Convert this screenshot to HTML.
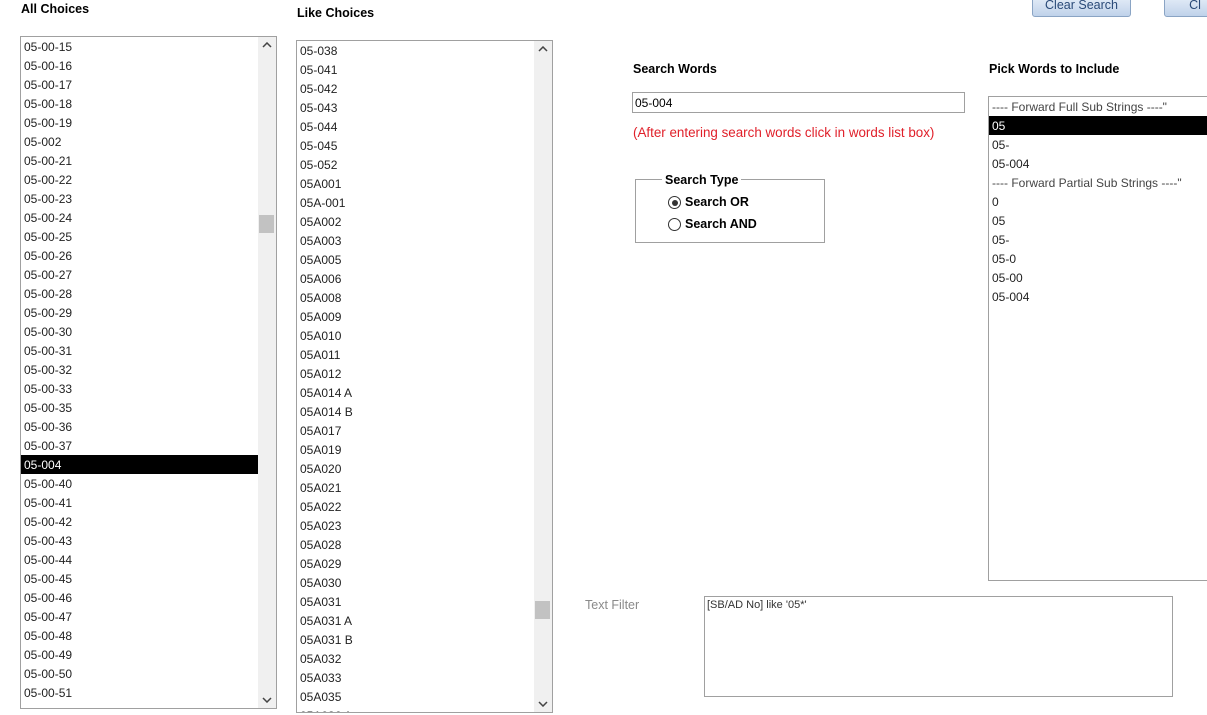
<!DOCTYPE html>
<html><head><style>
body{margin:0;width:1207px;height:715px;overflow:hidden;background:#fff;font-family:"Liberation Sans",sans-serif;font-size:12px;color:#000;position:relative}
.a{position:absolute}
.b{font-weight:bold;font-size:12.5px}
.lb{position:absolute;border:1px solid #a0a0a0;background:#fff;overflow:hidden}
.lb div.r{height:19px;line-height:20px;padding-left:3px;white-space:nowrap;color:#222}
.sel{background:#000;color:#fff!important}
.sb{position:absolute;top:0;bottom:0;right:0;width:18px;background:#f0f0f0}
.th{position:absolute;left:1px;width:15px;height:18px;background:#c2c2c2}
.ar{position:absolute;left:4px}
.btn{position:absolute;height:20px;border:1px solid #8aa4c4;border-radius:3px;background:linear-gradient(#e6eef8,#bfd2ea);color:#2a4a78;font-size:12.5px;text-align:center;line-height:18px}
</style></head><body>
<div class="a b" style="left:21px;top:2px">All Choices</div>
<div class="a b" style="left:297px;top:6px">Like Choices</div>
<div class="btn" style="left:1032px;top:-5px;width:97px">Clear Search</div>
<div class="btn" style="left:1164px;top:-5px;width:60px">Cl</div>

<div class="lb" style="left:20px;top:36px;width:255px;height:671px">
<div class="r">05-00-15</div><div class="r">05-00-16</div><div class="r">05-00-17</div><div class="r">05-00-18</div><div class="r">05-00-19</div><div class="r">05-002</div><div class="r">05-00-21</div><div class="r">05-00-22</div><div class="r">05-00-23</div><div class="r">05-00-24</div><div class="r">05-00-25</div><div class="r">05-00-26</div><div class="r">05-00-27</div><div class="r">05-00-28</div><div class="r">05-00-29</div><div class="r">05-00-30</div><div class="r">05-00-31</div><div class="r">05-00-32</div><div class="r">05-00-33</div><div class="r">05-00-35</div><div class="r">05-00-36</div><div class="r">05-00-37</div><div class="r sel" style="margin-right:18px">05-004</div><div class="r">05-00-40</div><div class="r">05-00-41</div><div class="r">05-00-42</div><div class="r">05-00-43</div><div class="r">05-00-44</div><div class="r">05-00-45</div><div class="r">05-00-46</div><div class="r">05-00-47</div><div class="r">05-00-48</div><div class="r">05-00-49</div><div class="r">05-00-50</div><div class="r">05-00-51</div>
<div class="sb"><svg class="ar" style="top:5px" width="10" height="6"><path d="M1 5L5 1L9 5" stroke="#444" stroke-width="1.5" fill="none"/></svg><div class="th" style="top:178px"></div><svg class="ar" style="bottom:5px" width="10" height="6"><path d="M1 1L5 5L9 1" stroke="#444" stroke-width="1.5" fill="none"/></svg></div>
</div>

<div class="lb" style="left:296px;top:40px;width:255px;height:671px">
<div class="r">05-038</div><div class="r">05-041</div><div class="r">05-042</div><div class="r">05-043</div><div class="r">05-044</div><div class="r">05-045</div><div class="r">05-052</div><div class="r">05A001</div><div class="r">05A-001</div><div class="r">05A002</div><div class="r">05A003</div><div class="r">05A005</div><div class="r">05A006</div><div class="r">05A008</div><div class="r">05A009</div><div class="r">05A010</div><div class="r">05A011</div><div class="r">05A012</div><div class="r">05A014 A</div><div class="r">05A014 B</div><div class="r">05A017</div><div class="r">05A019</div><div class="r">05A020</div><div class="r">05A021</div><div class="r">05A022</div><div class="r">05A023</div><div class="r">05A028</div><div class="r">05A029</div><div class="r">05A030</div><div class="r">05A031</div><div class="r">05A031 A</div><div class="r">05A031 B</div><div class="r">05A032</div><div class="r">05A033</div><div class="r">05A035</div><div class="r">05A036 A</div>
<div class="sb"><svg class="ar" style="top:5px" width="10" height="6"><path d="M1 5L5 1L9 5" stroke="#444" stroke-width="1.5" fill="none"/></svg><div class="th" style="top:560px"></div><svg class="ar" style="bottom:5px" width="10" height="6"><path d="M1 1L5 5L9 1" stroke="#444" stroke-width="1.5" fill="none"/></svg></div>
</div>

<div class="a b" style="left:633px;top:62px">Search Words</div>
<div class="a" style="left:632px;top:92px;line-height:20px;padding-left:2px;box-sizing:border-box;width:333px;height:21px;border:1px solid #a0a0a0">05-004</div>
<div class="a" style="left:633px;top:125px;color:#e0202a;font-size:13.4px">(After entering search words click in words list box)</div>

<div class="a" style="left:635px;top:179px;width:188px;height:62px;border:1px solid #a0a0a0"></div>
<div class="a b" style="left:662px;top:173px;background:#fff;padding:0 3px">Search Type</div>
<div class="a" style="left:668px;top:196px;width:11px;height:11px;border:1px solid #333;border-radius:50%"><div style="margin:2.5px;width:6px;height:6px;background:#333;border-radius:50%"></div></div>
<div class="a b" style="left:685px;top:195px">Search OR</div>
<div class="a" style="left:668px;top:218px;width:11px;height:11px;border:1px solid #333;border-radius:50%"></div>
<div class="a b" style="left:685px;top:217px">Search AND</div>

<div class="a b" style="left:989px;top:62px">Pick Words to Include</div>
<div class="lb" style="left:988px;top:96px;width:240px;height:483px">
<div class="r" style="color:#444">---- Forward Full Sub Strings ----"</div><div class="r sel">05</div><div class="r">05-</div><div class="r">05-004</div><div class="r" style="color:#444">---- Forward Partial Sub Strings ----"</div><div class="r">0</div><div class="r">05</div><div class="r">05-</div><div class="r">05-0</div><div class="r">05-00</div><div class="r">05-004</div>
</div>

<div class="a" style="left:585px;top:598px;color:#8a8a8a;font-size:12.5px">Text Filter</div>
<div class="a" style="left:704px;top:596px;border:1px solid #a0a0a0;font-size:11px;color:#333;padding:2px 0 0 2px;box-sizing:border-box;width:469px;height:101px">[SB/AD No] like '05*'</div>
</body></html>
